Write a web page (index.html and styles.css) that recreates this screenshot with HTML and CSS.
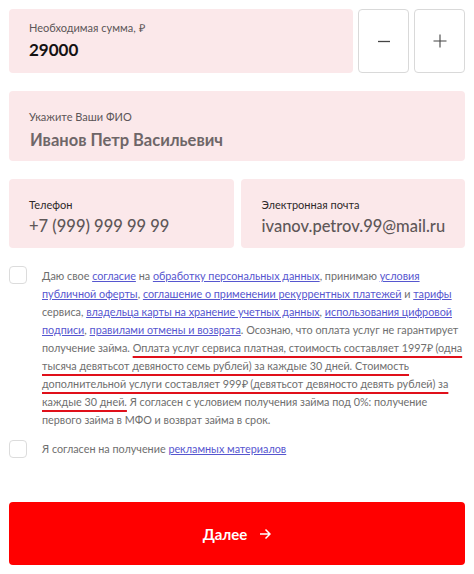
FILE: index.html
```html
<!DOCTYPE html>
<html lang="ru">
<head>
    <meta charset="UTF-8">
    <meta name="viewport" content="width=device-width, initial-scale=1.0">
    <title>Заявка на займ</title>
    <link rel="stylesheet" href="styles.css">
</head>
<body>

    <form class="form">
        <!-- Сумма -->
        <div class="row-sum">
            <div class="field field-sum">
                <div class="label">Необходимая сумма, ₽</div>
                <div class="value value-dark">29000</div>
            </div>
            <button type="button" class="step">
                <svg width="14" height="14" viewBox="0 0 14 14"><path d="M1 7.5h12" stroke="#444" stroke-width="1.3"/></svg>
            </button>
            <button type="button" class="step">
                <svg width="14" height="14" viewBox="0 0 14 14"><path d="M0.5 7h13M7 0.5v13" stroke="#444" stroke-width="1.1"/></svg>
            </button>
        </div>

        <!-- ФИО -->
        <div class="field field-name">
            <div class="label">Укажите Ваши ФИО</div>
            <div class="value value-name">Иванов Петр Васильевич</div>
        </div>

        <!-- Контакты -->
        <div class="row-contacts">
            <div class="field field-contact">
                <div class="label label-dark">Телефон</div>
                <div class="value value-contact">+7 (999) 999 99 99</div>
            </div>
            <div class="field field-contact">
                <div class="label label-dark">Электронная почта</div>
                <div class="value value-contact">ivanov.petrov.99@mail.ru</div>
            </div>
        </div>

        <!-- Согласия -->
        <div class="consent consent-main">
            <span class="box"></span>
            <p class="consent-text">Даю свое <a href="#">согласие</a> на <a href="#">обработку персональных данных</a>, принимаю <a href="#">условия</a><br><a href="#">публичной оферты</a>, <a href="#">соглашение о применении рекуррентных платежей</a> и <a href="#">тарифы</a><br>сервиса, <a href="#">владельца карты на хранение учетных данных</a>, <a href="#">использования цифровой</a><br><a href="#">подписи</a>, <a href="#">правилами отмены и возврата</a>. Осознаю, что оплата услуг не гарантирует<br>получение займа. <span class="mark">Оплата услуг сервиса платная, стоимость составляет 1997₽ (одна<br>тысяча девятьсот девяносто семь рублей) за каждые 30 дней. Стоимость<br>дополнительной услуги составляет 999₽ (девятьсот девяносто девять рублей) за<br>каждые 30 дней.</span> Я согласен с условием получения займа под 0%: получение<br>первого займа в МФО и возврат займа в срок.</p>
        </div>

        <div class="consent consent-ads">
            <span class="box"></span>
            <p class="consent-text">Я согласен на получение <a href="#">рекламных материалов</a></p>
        </div>

        <button type="button" class="submit">
            Далее
            <svg width="12" height="12" viewBox="0 0 12 12"><path d="M1 6h10M6.5 1.5L11 6l-4.5 4.5" fill="none" stroke="#fff" stroke-width="1.5"/></svg>
        </button>
    </form>

</body>
</html>
```

FILE: styles.css
```css
/* Basic Styling */
body {
    margin: 0;
    font-family: Lato, "Open Sans", sans-serif;
    background-color: #fff;
    color: #333;
}

.form {
    padding: 9px;
    display: flex;
    flex-direction: column;
}

/* Fields */
.field {
    background-color: #fbe8ea;
    border-radius: 4px;
    padding: 0 20px;
    display: flex;
    flex-direction: column;
    box-sizing: border-box;
    min-width: 0;
}

.label {
    font-size: 11px;
    line-height: 14px;
    color: #5c5658;
}

.label-dark {
    color: #2e2a2b;
}

.value {
    font-size: 17px;
    line-height: 22px;
    margin-top: 4px;
    white-space: nowrap;
}

.value-dark {
    font-weight: 700;
    color: #141213;
}

.value-name {
    font-size: 16.5px;
    font-weight: 700;
    color: #6e6668;
    margin-top: 5px;
    padding-left: 1px;
}

.value-contact {
    font-size: 16.5px;
    color: #5e5758;
    font-weight: 500;
    margin-top: 3px;
}

/* Sum row */
.row-sum {
    display: flex;
    gap: 5px;
    height: 64px;
}

.field-sum {
    flex: 1;
    padding-top: 12px;
}

.step {
    width: 51px;
    background: #fff;
    border: 1px solid #d9d9d9;
    border-radius: 4px;
    display: flex;
    align-items: center;
    justify-content: center;
    padding: 0;
    cursor: pointer;
}

.field-name {
    margin-top: 18px;
    height: 70px;
    padding-top: 19px;
}

/* Contacts */
.row-contacts {
    margin-top: 18px;
    display: grid;
    grid-template-columns: minmax(0, 1fr) minmax(0, 1fr);
    gap: 7px;
}

.field-contact {
    height: 69px;
    padding-top: 19px;
}

.field-contact + .field-contact {
    padding-left: 21px;
}

/* Consents */
.consent {
    display: flex;
    gap: 15px;
}

.consent-main {
    margin-top: 18px;
}

.consent-ads {
    margin-top: 11px;
}

.box {
    flex: none;
    width: 16px;
    height: 16px;
    border: 1px solid #dcdcdc;
    border-radius: 4px;
}

.consent-text {
    margin: 1px 0 0;
    font-size: 10.8px;
    line-height: 18px;
    color: #6e6e6e;
    white-space: nowrap;
}

.consent-ads .consent-text {
    margin-top: 0;
}

.consent-text a {
    color: #5656cf;
    text-decoration: underline;
}

.mark {
    text-decoration: underline;
    text-decoration-color: #e0101a;
    text-decoration-thickness: 2px;
    text-underline-offset: 4px;
    text-decoration-skip-ink: none;
}

/* Submit */
.submit {
    margin-top: 44px;
    height: 63px;
    border: none;
    border-radius: 4px;
    background-color: #ff0000;
    color: #fff;
    font-family: inherit;
    font-size: 15px;
    font-weight: 700;
    display: flex;
    align-items: center;
    justify-content: center;
    gap: 12px;
    cursor: pointer;
}
```
